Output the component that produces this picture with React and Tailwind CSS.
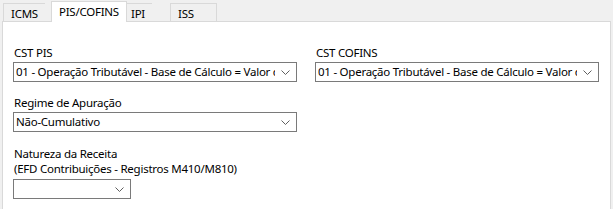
import React from 'react';

const Chevron = () => (
    <svg width="9" height="5" viewBox="0 0 9 5" className="shrink-0">
        <polyline points="0.5,0.5 4.5,4.5 8.5,0.5" fill="none" stroke="#5f5f5f" strokeWidth="1" />
    </svg>
);

const Combo = ({ value, width = 'w-[284px]' }) => (
    <div className={`${width} h-[20px] border border-[#7a7a7a] bg-white flex items-center pl-[2px] pr-[6px]`}>
        <div className="flex-1 overflow-hidden whitespace-nowrap leading-[18px]">{value}</div>
        <div className="pl-[6px] flex items-center">
            <Chevron />
        </div>
    </div>
);

const Tab = ({ label, active, last }) => {
    if (active) {
        return (
            <div className="relative z-10 -mb-px h-[21px] px-[7px] bg-white border-t border-l border-r border-[#d9d9d9] flex items-start pt-[1px]">
                {label}
            </div>
        );
    }
    return (
        <div className={`h-[18px] px-[7px] bg-[#f0f0f0] border-t border-l border-[#d9d9d9] flex items-start pt-px ${last ? 'border-r w-[47px]' : ''}`}>
            {label}
        </div>
    );
};

export default function App() {
    return (
        <div className="w-[613px] h-[209px] bg-[#f0f0f0] overflow-hidden text-[11.5px] tracking-[-0.25px] text-black font-['Segoe_UI','Noto_Sans',sans-serif]">
            <div className="flex items-end h-[21px] pl-[3px]">
                <div className="w-[48px] flex"><Tab label="ICMS" /></div>
                <div className="w-[72px] flex"><Tab label="PIS/COFINS" active /></div>
                <div className="w-[47px] flex"><Tab label="IPI" /></div>
                <Tab label="ISS" last />
            </div>
            <div className="ml-[2px] w-[609px] h-[200px] bg-white border border-[#d9d9d9] pt-[23px] pl-[10px]">
                <div className="grid grid-cols-[284px_284px] gap-x-[18px]">
                    <div>
                        <div className="h-[17px] leading-[16px] pl-px">CST PIS</div>
                        <Combo value="01 - Operação Tributável - Base de Cálculo = Valor da Operação Alíquota Normal" />
                    </div>
                    <div>
                        <div className="h-[17px] leading-[16px] pl-px">CST COFINS</div>
                        <Combo value="01 - Operação Tributável - Base de Cálculo = Valor da Operação Alíquota Normal" />
                    </div>
                </div>
                <div className="mt-[13px]">
                    <div className="h-[17px] leading-[16px] pl-px">Regime de Apuração</div>
                    <Combo value="Não-Cumulativo" />
                </div>
                <div className="mt-[14px]">
                    <div className="leading-[15px] pl-px">
                        Natureza da Receita
                        <br />
                        (EFD Contribuições - Registros M410/M810)
                    </div>
                    <div className="mt-[3px]">
                        <Combo value="" width="w-[118px]" />
                    </div>
                </div>
            </div>
        </div>
    );
}
